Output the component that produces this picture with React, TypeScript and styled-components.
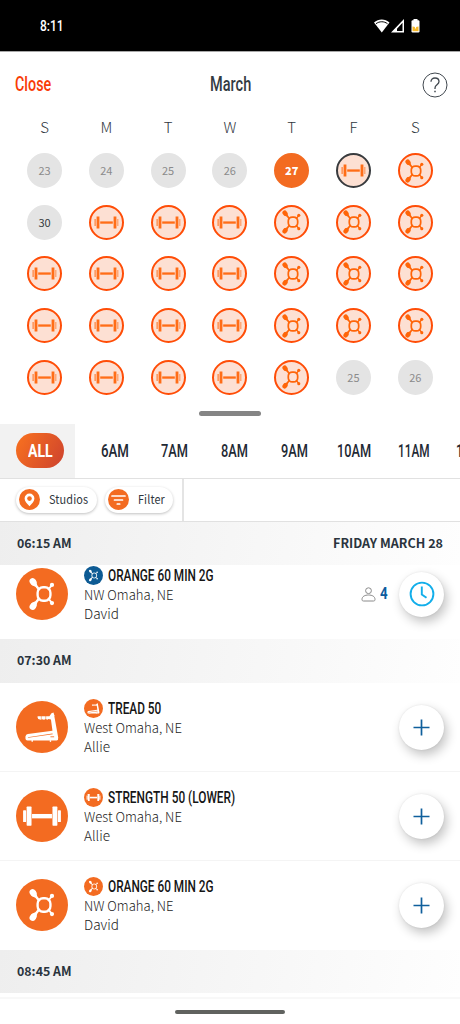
import React, { useLayoutEffect, useRef, useState } from 'react';
import styled, { createGlobalStyle } from 'styled-components';

const GlobalStyle = createGlobalStyle`
  * { box-sizing: border-box; }
  body { margin: 0; background: #fff; font-family: 'Noto Sans CJK SC', 'Noto Sans', sans-serif; color: #333b42; }
`;

const Screen = styled.main`
  width: 460px;
  height: 1024px;
  overflow: hidden;
  display: flex;
  flex-direction: column;
  background: #fff;
`;

const FitBox = styled.span<{ $w: number }>`
  display: inline-block;
  flex: none;
  width: ${p => p.$w}px;
  white-space: nowrap;
`;
const FitInner = styled.span`
  display: inline-block;
  transform-origin: 0 50%;
`;

function Fit({ w, children }: { w: number; children: React.ReactNode }) {
  const ref = useRef<HTMLSpanElement>(null);
  const [scale, setScale] = useState(1);
  useLayoutEffect(() => {
    if (ref.current) setScale(w / ref.current.offsetWidth);
  }, [w]);
  return (
    <FitBox $w={w}>
      <FitInner ref={ref} style={{ transform: `scaleX(${scale})` }}>{children}</FitInner>
    </FitBox>
  );
}

const StatusBar = styled.header`
  height: 52px;
  flex: none;
  background: #000;
  border-bottom: 1px solid #a8a8a8;
  display: flex;
  align-items: center;
  justify-content: space-between;
  padding: 1px 39px 0 40px;
  color: #fff;
  font: 500 15px/20px Roboto, sans-serif;
`;
const StatusIcons = styled.div`
  display: flex;
  align-items: center;
`;

const TopBar = styled.div`
  height: 64px;
  flex: none;
  display: grid;
  grid-template-columns: 1fr auto 1fr;
  align-items: center;
  padding: 1px 12px 0 15px;
  font: 500 19.5px/24px Roboto, sans-serif;
`;
const CloseButton = styled.span`
  color: #f93c06;
`;
const Month = styled.span`
  margin: 0 3px 0 0;
`;
const Help = styled.span`
  justify-self: end;
  display: flex;
`;

const CalendarGrid = styled.section`
  flex: none;
  display: grid;
  grid-template-columns: repeat(7, 61.8px);
  grid-template-rows: 29px repeat(5, 51.6px);
  padding-left: 13.6px;
  justify-items: center;
  align-items: center;
`;
const Weekday = styled.span`
  font-size: 15px;
  line-height: 22px;
  font-weight: 300;
  color: #30373e;
  margin-top: -6.5px;
`;
type DayKind = 'past' | 'open' | 'today' | 'class' | 'picked';
const ringColors: Record<DayKind, string> = {
  past: '#e4e4e4', open: '#e4e4e4', today: '#f36b21', class: '#ff4d07', picked: '#383b3e',
};
const DayCircle = styled.div<{ $kind: DayKind }>`
  width: 35px;
  height: 35px;
  border-radius: 50%;
  display: flex;
  align-items: center;
  justify-content: center;
  border: 2px solid ${p => ringColors[p.$kind]};
  background: ${p => (p.$kind === 'class' || p.$kind === 'picked' ? '#fde0d3' : ringColors[p.$kind])};
  color: ${p => (p.$kind === 'today' ? '#fff' : p.$kind === 'open' ? '#343a40' : '#8b8b8b')};
  font-weight: ${p => (p.$kind === 'today' ? 900 : 400)};
  font-size: 11px;
  line-height: 16px;
  padding-bottom: 1px;
`;

const Handle = styled.div`
  flex: none;
  width: 62px;
  height: 5px;
  border-radius: 3px;
  background: #858585;
  margin: 8px auto 8px 199px;
`;

const HourTabs = styled.nav`
  flex: none;
  height: 55px;
  display: flex;
  align-items: center;
  overflow: hidden;
  border-bottom: 1px solid #e1e1e1;
  font: 500 18px/22px Roboto, sans-serif;
  color: #1f2a35;
`;
const AllTab = styled.div`
  flex: none;
  width: 75px;
  height: 100%;
  background: #f2f2f2;
  padding: 9px 0 0 16px;
`;
const AllPill = styled.div`
  width: 48px;
  height: 35.5px;
  border-radius: 17.5px;
  background: linear-gradient(120deg, #f36b21 15%, #cd422e);
  color: #fff;
  font-size: 19px;
  font-weight: 700;
  display: flex;
  align-items: center;
  justify-content: center;
`;
const HourTab = styled.div<{ $gap: number }>`
  flex: none;
  margin-left: ${p => p.$gap}px;
`;

const FilterBar = styled.div`
  flex: none;
  height: 43px;
  display: flex;
  align-items: center;
  border-bottom: 1px solid #e1e1e1;
`;
const FilterGroup = styled.div`
  width: 184px;
  height: 100%;
  border-right: 2px solid #e4e4e4;
  display: flex;
  align-items: center;
  gap: 8px;
  padding-left: 16px;
`;
const Chip = styled.div<{ $w: number }>`
  flex: none;
  width: ${p => p.$w}px;
  height: 26px;
  border-radius: 13px;
  padding-left: 3px;
  background: #fff;
  box-shadow: 0 1px 3px rgba(0, 0, 0, 0.25);
  display: flex;
  align-items: center;
  gap: 9px;
  font-size: 12px;
  line-height: 18px;
  letter-spacing: 0.15px;
  color: #30373e;
`;
const ChipLabel = styled.span`
  padding-bottom: 1px;
`;

const SlotHeader = styled.div<{ $h: number }>`
  flex: none;
  height: ${p => p.$h}px;
  display: flex;
  align-items: center;
  justify-content: space-between;
  padding: 0 17px 1px;
  background: linear-gradient(100deg, #eeeeee, #fefefe);
  font-weight: 700;
  font-size: 12.5px;
  line-height: 18px;
  color: #2a343d;
`;

const ClassClip = styled.div<{ $h: number; $line?: boolean }>`
  flex: none;
  height: ${p => p.$h}px;
  overflow: hidden;
  display: flex;
  align-items: flex-end;
  box-shadow: ${p => (p.$line ? 'inset 0 -1px #f4f4f4' : 'none')};
`;
const ClassRow = styled.article`
  width: 100%;
  height: 89px;
  flex: none;
  display: flex;
  align-items: center;
  padding: 0 16px 0 16px;
`;
const ClassText = styled.div`
  margin-left: 16px;
  flex: 1;
`;
const ClassTitle = styled.h3`
  margin: 0;
  height: 19px;
  display: flex;
  align-items: center;
  gap: 5px;
  font: 500 15.7px/19px Roboto, sans-serif;
  color: #151515;
`;
const ClassLine = styled.p`
  margin: 0;
  font-size: 13.6px;
  line-height: 18.5px;
  font-weight: 300;
  color: #1c1c1c;
`;
const Waiting = styled.div`
  display: flex;
  align-items: center;
  gap: 4px;
  margin-right: 12px;
  font: 700 16px/20px Roboto, sans-serif;
  color: #0d5c9e;
`;
const ActionButton = styled.div`
  width: 45px;
  height: 45px;
  border-radius: 50%;
  background: #fff;
  box-shadow: 3px 5px 11px rgba(0, 0, 0, 0.24), 0 0 2px rgba(0, 0, 0, 0.1);
  display: flex;
  align-items: center;
  justify-content: center;
`;

const Footer = styled.footer`
  flex: 1;
  display: flex;
  justify-content: center;
  align-items: flex-start;
  margin-top: 4px;
  border-top: 2px solid #f8f8f8;
  padding-top: 11px;
`;
const HomeIndicator = styled.div`
  width: 110px;
  height: 4px;
  border-radius: 2px;
  background: #60625f;
`;

type IconKind = 'splat' | 'dumbbell' | 'treadmill';

const Splat = () => (
  <g>
    <ellipse cx="50.500" cy="41" rx="9.500" ry="11.500" transform="rotate(-38 50.500 41)" />
    <path d="M58 36l5 15 9 12-5 5-9-12-13-7z" />
    <ellipse cx="50.500" cy="113" rx="9.500" ry="11.500" transform="rotate(38 50.500 113)" />
    <path d="M58 118l5-15 9-12-5-5-9 12-13 7z" />
    <path d="M95 65 L106 51 M95 89 L106 103" stroke="currentColor" strokeWidth="5.500" />
    <circle cx="106.500" cy="50" r="6.300" />
    <circle cx="106.500" cy="104" r="6.300" />
    <rect x="64" y="57" width="38" height="40" rx="16" fill="none" stroke="currentColor" strokeWidth="7" />
  </g>
);
const Dumbbell = () => (
  <g>
    <rect x="47.5" y="71" width="59" height="13" />
    <rect x="31.5" y="49" width="14.5" height="57" rx="2" />
    <rect x="108" y="49" width="14.5" height="57" rx="2" />
    <rect x="21" y="60" width="9" height="35" rx="2" />
    <rect x="124" y="60" width="9" height="35" rx="2" />
  </g>
);
const Treadmill = ({ ground }: { ground: string }) => (
  <g>
    <path d="M63 48q0-3 3-3h33l6-9 6-2 3 10-10 11-8-2q-2 3-5 2l-3-2q-3 3-8 2l-3-1q-2 2-6 1-7 0-7-7z" />
    <path d="M75 44v12M88 44v12" stroke={ground} strokeWidth="1.500" />
    <path d="M102 44l11-2 12 66q1 8-5 9H50v4h-4v-4H34q-6 0-6-6v-6q1-6 7-7l73-10z" />
    <path d="M35 107L108 96l1 2.500-73 10.500z" fill={ground} />
    <path d="M102 106h11" stroke={ground} strokeWidth="2.500" />
    <rect x="100" y="116" width="4" height="5" />
  </g>
);
const glyph = (kind: IconKind, ground: string) =>
  kind === 'splat' ? <Splat /> : kind === 'dumbbell' ? <Dumbbell /> : <Treadmill ground={ground} />;

const Badge = styled.svg`
  flex: none;
  display: block;
`;
function ClassBadge({ kind, size, color = '#f36b21' }: { kind: IconKind; size: number; color?: string }) {
  return (
    <Badge width={size} height={size} viewBox="0 0 154 154" color="#fff" fill="#fff">
      <circle cx="77" cy="77" r="77" fill={color} />
      {glyph(kind, color)}
    </Badge>
  );
}
const DayBadge = styled(Badge)`
  margin-top: 1px;
`;
function DayGlyph({ kind }: { kind: IconKind }) {
  return kind === 'splat' ? (
    <DayBadge width="38" height="38" viewBox="2 0 154 154" color="#ff6508" fill="#ff6508">{glyph(kind, '')}</DayBadge>
  ) : (
    <DayBadge width="25" height="13" viewBox="0 0 25 13" fill="#ff6d17">
      <rect x="6.200" y="5.400" width="12.600" height="2.300" />
      <rect x="2.600" y="0.500" width="2.800" height="12" />
      <rect x="19.600" y="0.500" width="2.800" height="12" />
      <rect x="0.600" y="3" width="1" height="7" />
      <rect x="23.200" y="3" width="1.200" height="7" opacity="0.600" />
    </DayBadge>
  );
}

type Day = { n?: number; kind: DayKind; icon?: IconKind };
const past = (n: number): Day => ({ n, kind: 'past' });
const lift: Day = { kind: 'class', icon: 'dumbbell' };
const otf: Day = { kind: 'class', icon: 'splat' };
const days: Day[] = [
  past(23), past(24), past(25), past(26), { n: 27, kind: 'today' }, { kind: 'picked', icon: 'dumbbell' }, otf,
  { n: 30, kind: 'open' }, lift, lift, lift, otf, otf, otf,
  lift, lift, lift, lift, otf, otf, otf,
  lift, lift, lift, lift, otf, otf, otf,
  lift, lift, lift, lift, otf, past(25), past(26),
];

const hours = [
  { label: '6AM', w: 28, gap: 26 },
  { label: '7AM', w: 27, gap: 32 },
  { label: '8AM', w: 27, gap: 33 },
  { label: '9AM', w: 27, gap: 32.5 },
  { label: '10AM', w: 34, gap: 29 },
  { label: '11AM', w: 31.5, gap: 27 },
  { label: '12PM', w: 34, gap: 27 },
];

interface ClassProps {
  kind: IconKind; title: string; w: number; studio: string; studioW: number; coach: string;
  h: number; line?: boolean; badge?: string; waiting?: number;
}
function ClassItem({ kind, title, w, studio, studioW, coach, h, line, badge, waiting }: ClassProps) {
  return (
    <ClassClip $h={h} $line={line}>
      <ClassRow>
        <ClassBadge kind={kind} size={52} />
        <ClassText>
          <ClassTitle><ClassBadge kind={kind} size={19} color={badge} /><Fit w={w}>{title}</Fit></ClassTitle>
          <ClassLine><Fit w={studioW}>{studio}</Fit></ClassLine>
          <ClassLine>{coach}</ClassLine>
        </ClassText>
        {waiting && (
          <Waiting>
            <svg width="15" height="15" viewBox="0 0 15 15" fill="none" stroke="#8a8a8a" strokeWidth="1">
              <circle cx="7.500" cy="3.700" r="2.900" />
              <path d="M1 12.500c0-3 2.700-4.500 6.500-4.500s6.500 1.500 6.500 4.500c0 1-.5 1.500-1.500 1.500h-10C1.500 14 1 13.500 1 12.500z" />
            </svg>
            <Fit w={7.5}>{waiting}</Fit>
          </Waiting>
        )}
        <ActionButton>
          {waiting ? (
            <svg width="26" height="26" viewBox="0 0 26 26" fill="none" stroke="#12aeea" strokeWidth="1.900">
              <circle cx="13" cy="13" r="11.400" />
              <path d="M12.800 5.500v8l4.700 3.300" />
            </svg>
          ) : (
            <svg width="17" height="17" viewBox="0 0 17 17" stroke="#0f5f9c" strokeWidth="1.700">
              <path d="M8.500 .5v16M.5 8.500h16" />
            </svg>
          )}
        </ActionButton>
      </ClassRow>
    </ClassClip>
  );
}

export default function App() {
  return (
    <Screen>
      <GlobalStyle />
      <StatusBar>
        <Fit w={24}>8:11</Fit>
        <StatusIcons>
          <svg width="47" height="14" viewBox="0 0 47 14" fill="#fff">
            <path d="M0 3.500C4.500-.4 11-.4 15.500 3.500L7.800 13.400z" />
            <path d="M2 4.700c3.500-2.600 8-2.600 11.500 0" fill="none" stroke="#000" strokeWidth="1" />
            <path d="M30 0v13.400H17zM28.500 3.700l-5.500 6v2.300h5.500z" fillRule="evenodd" />
            <rect x="37.500" y="1.200" width="8" height="12.200" rx="1.200" />
            <rect x="39.500" y="0" width="4" height="2" />
            <rect x="38.500" y="7.500" width="6" height="4.700" fill="#f7b928" />
            <path d="M41.500 5v4.500M39.500 7.200h4" stroke="#fff" strokeWidth="1.200" />
          </svg>
        </StatusIcons>
      </StatusBar>

      <TopBar>
        <CloseButton><Fit w={36}>Close</Fit></CloseButton>
        <Month><Fit w={41}>March</Fit></Month>
        <Help>
          <svg width="26" height="26" viewBox="0 0 26 26" fill="none" stroke="#41484f">
            <circle cx="13" cy="13" r="12" strokeWidth="1" />
            <path d="M9 9.800c0-2.300 1.700-3.800 4-3.800s4 1.400 4 3.600c0 3.200-4 3.300-4 6.400v1" strokeWidth="1.300" />
            <path d="M13 18.700v1.600" strokeWidth="1.500" />
          </svg>
        </Help>
      </TopBar>

      <CalendarGrid>
        {['S', 'M', 'T', 'W', 'T', 'F', 'S'].map((d, i) => <Weekday key={i}>{d}</Weekday>)}
        {days.map((d, i) => (
          <DayCircle key={i} $kind={d.kind}>{d.icon ? <DayGlyph kind={d.icon} /> : d.n}</DayCircle>
        ))}
      </CalendarGrid>
      <Handle />

      <HourTabs>
        <AllTab><AllPill><Fit w={24.5}>ALL</Fit></AllPill></AllTab>
        {hours.map(h => <HourTab key={h.label} $gap={h.gap}><Fit w={h.w}>{h.label}</Fit></HourTab>)}
      </HourTabs>

      <FilterBar>
        <FilterGroup>
          <Chip $w={81}>
            <svg width="21" height="21" viewBox="0 0 21 21">
              <circle cx="10.500" cy="10.500" r="10.500" fill="#f36b21" />
              <path d="M10.500 17.200C8 14.500 5.600 12.500 5.600 9.500a4.900 4.900 0 0 1 9.800 0c0 3-2.400 5-4.900 7.700z" fill="#fff" />
              <circle cx="10.500" cy="9.600" r="2.300" fill="#f36b21" />
            </svg>
            <ChipLabel><Fit w={39}>Studios</Fit></ChipLabel>
          </Chip>
          <Chip $w={68}>
            <svg width="21" height="21" viewBox="0 0 21 21" stroke="#fff" strokeWidth="1.700" strokeLinecap="round">
              <circle cx="10.500" cy="10.500" r="10.500" fill="#f36b21" stroke="none" />
              <path d="M4 7h13M6.500 11h8M9.300 15h2.400" />
            </svg>
            <ChipLabel><Fit w={27}>Filter</Fit></ChipLabel>
          </Chip>
        </FilterGroup>
      </FilterBar>

      <SlotHeader $h={43}><Fit w={54.5}>06:15 AM</Fit><Fit w={110}>FRIDAY MARCH 28</Fit></SlotHeader>
      <ClassItem kind="splat" title="ORANGE 60 MIN 2G" w={105.5} studio="NW Omaha, NE" studioW={89.5} coach="David" h={74} badge="#0d5b94" waiting={4} />
      <SlotHeader $h={44}><Fit w={54.5}>07:30 AM</Fit></SlotHeader>
      <ClassItem kind="treadmill" title="TREAD 50" w={53.5} studio="West Omaha, NE" studioW={97.5} coach="Allie" h={89} line />
      <ClassItem kind="dumbbell" title="STRENGTH 50 (LOWER)" w={127} studio="West Omaha, NE" studioW={97.5} coach="Allie" h={89} line />
      <ClassItem kind="splat" title="ORANGE 60 MIN 2G" w={105.5} studio="NW Omaha, NE" studioW={89.5} coach="David" h={89} />
      <SlotHeader $h={43}><Fit w={54.5}>08:45 AM</Fit></SlotHeader>
      <Footer><HomeIndicator /></Footer>
    </Screen>
  );
}
